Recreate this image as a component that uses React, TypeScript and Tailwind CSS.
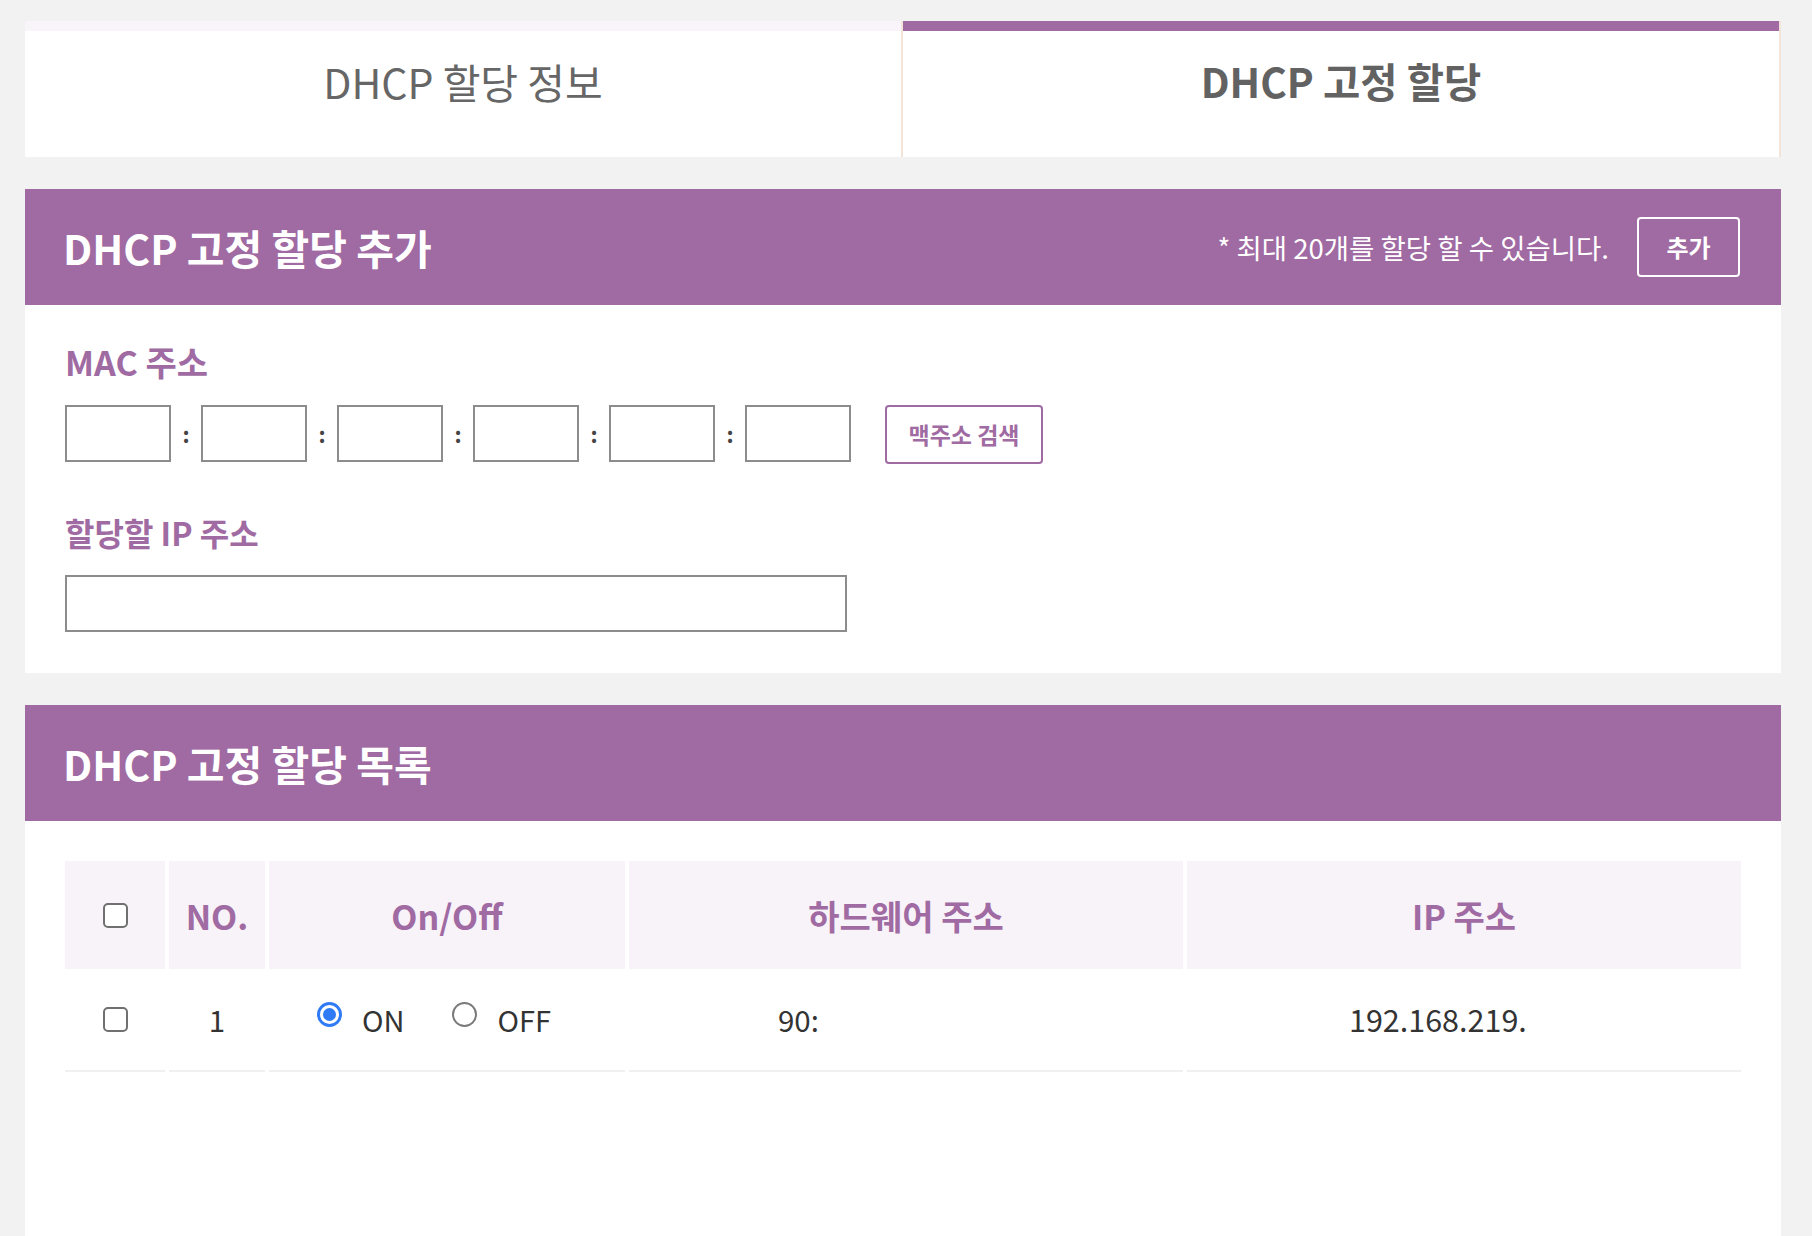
const font = { fontFamily: '"Noto Sans CJK KR", "Noto Sans", sans-serif' }

function Checkbox() {
  return <div className="w-[25px] h-[25px] rounded-[5px] border-2 border-[#707070] bg-white" />
}

function Radio({ on }: { on?: boolean }) {
  if (on) {
    return (
      <div className="mb-[10px] flex h-[25px] w-[25px] items-center justify-center rounded-full border-[3px] border-[#2f7bf5] bg-white">
        <div className="h-[13px] w-[13px] rounded-full bg-[#2f7bf5]" />
      </div>
    )
  }
  return <div className="mb-[10px] h-[25px] w-[25px] rounded-full border-2 border-[#7a7a7a] bg-white" />
}

function MacBox() {
  return <div className="h-[57px] w-[106px] border-2 border-[#8c8c8c] bg-white" />
}

function Colon() {
  return <div className="flex w-[30px] justify-center text-[22px] font-bold leading-[57px] text-[#444]">:</div>
}

function PanelHeader({ title, children }: { title: string; children?: React.ReactNode }) {
  return (
    <div className="flex h-[116px] items-center justify-between bg-[#a06aa2] pl-[38px] pr-[41px]">
      <div className="text-[41px] font-bold leading-[40px] text-white">{title}</div>
      {children}
    </div>
  )
}

const cols = 'grid grid-cols-[100px_96px_356px_554px_554px] gap-x-[4px]'

export default function App() {
  return (
    <div className="min-h-[1236px] bg-[#f2f2f2] pl-[25px] pt-[21px]" style={font}>
      <div className="w-[1756px]">
        {/* tabs */}
        <div className="flex">
          <div className="w-[876px] bg-white">
            <div className="h-[10px] bg-[#f8f4fa]" />
            <div className="h-[126px] pt-[30px] text-center text-[41px] leading-[40px] text-[#666]">DHCP 할당 정보</div>
          </div>
          <div className="w-[880px] border-x-2 border-[#f2e4d8] bg-white">
            <div className="h-[10px] bg-[#a06aa2]" />
            <div className="h-[126px] pt-[30px] text-center text-[40.5px] font-bold leading-[40px] text-[#626262]">DHCP 고정 할당</div>
          </div>
        </div>

        {/* add */}
        <div className="mt-[32px]">
          <PanelHeader title="DHCP 고정 할당 추가">
            <div className="flex items-center gap-[28px]">
              <span className="text-[27.5px] leading-[30px] text-white">* 최대 20개를 할당 할 수 있습니다.</span>
              <button className="flex h-[60px] w-[103px] items-center justify-center rounded-[4px] border-2 border-white text-[24px] font-bold text-white">
                추가
              </button>
            </div>
          </PanelHeader>
          <div className="bg-white px-[40px] pb-[41px] pt-[41px]">
            <div className="text-[34px] font-bold leading-[32px] text-[#a06aa2]">MAC 주소</div>
            <div className="mt-[27px] flex items-start">
              <MacBox />
              <Colon />
              <MacBox />
              <Colon />
              <MacBox />
              <Colon />
              <MacBox />
              <Colon />
              <MacBox />
              <Colon />
              <MacBox />
              <button className="ml-[34px] flex h-[59px] w-[158px] items-center justify-center rounded-[4px] border-2 border-[#a06aa2] text-[23px] font-bold text-[#a06aa2]">
                맥주소 검색
              </button>
            </div>
            <div className="mt-[52px] text-[32px] font-bold leading-[32px] text-[#a06aa2]">할당할 IP 주소</div>
            <div className="mt-[27px] h-[57px] w-[782px] border-2 border-[#8c8c8c] bg-white" />
          </div>
        </div>

        {/* list */}
        <div className="mt-[32px]">
          <PanelHeader title="DHCP 고정 할당 목록" />
          <div className="bg-white px-[40px] pb-[200px] pt-[40px]">
            <div className={cols}>
              <div className="flex h-[108px] items-center justify-center bg-[#f8f3f9]">
                <Checkbox />
              </div>
              {['NO.', 'On/Off', '하드웨어 주소', 'IP 주소'].map(h => (
                <div key={h} className="flex h-[108px] items-center justify-center bg-[#f8f3f9] text-[34px] font-bold text-[#a06aa2]">
                  {h}
                </div>
              ))}
            </div>
            <div className={cols}>
              <div className="flex h-[103px] items-center justify-center border-b-2 border-[#f0f0f0]">
                <Checkbox />
              </div>
              <div className="flex h-[103px] items-center justify-center border-b-2 border-[#f0f0f0] text-[29.5px] text-[#333]">1</div>
              <div className="flex h-[103px] items-center border-b-2 border-[#f0f0f0] pl-[48px] text-[29px] text-[#333]">
                <Radio on />
                <span className="ml-[20px]">ON</span>
                <div className="ml-[47px]"><Radio /></div>
                <span className="ml-[21px]">OFF</span>
              </div>
              <div className="flex h-[103px] items-center border-b-2 border-[#f0f0f0] pl-[149px] text-[29.5px] text-[#333]">90:</div>
              <div className="flex h-[103px] items-center border-b-2 border-[#f0f0f0] pl-[162px] text-[30.5px] text-[#333]">192.168.219.</div>
            </div>
          </div>
        </div>
      </div>
    </div>
  )
}
